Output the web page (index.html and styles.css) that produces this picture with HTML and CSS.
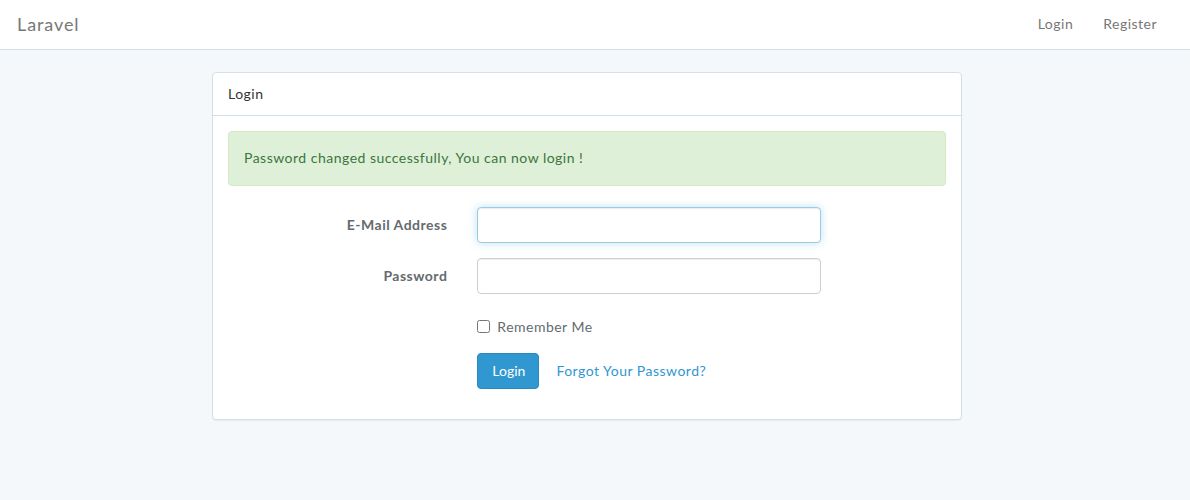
FILE: index.html
```html
<!DOCTYPE html>
<html lang="en">
<head>
<meta charset="utf-8">
<title>Laravel</title>
<link rel="stylesheet" href="styles.css">
</head>
<body>
<nav class="navbar">
  <a class="brand" href="#">Laravel</a>
  <ul class="nav-right">
    <li><a href="#">Login</a></li>
    <li><a href="#">Register</a></li>
  </ul>
</nav>
<main class="main">
  <div class="panel">
    <div class="panel-heading">Login</div>
    <div class="panel-body">
      <div class="alert">Password changed successfully, You can now login !</div>
      <form class="form">
        <div class="form-group">
          <label class="control-label" for="email">E-Mail Address</label>
          <div class="field"><input id="email" type="email" class="form-control focused"></div>
        </div>
        <div class="form-group">
          <label class="control-label" for="password">Password</label>
          <div class="field"><input id="password" type="password" class="form-control"></div>
        </div>
        <div class="form-group">
          <div class="spacer"></div>
          <div class="field checkbox"><label><input type="checkbox" class="cb"> Remember Me</label></div>
        </div>
        <div class="form-group last">
          <div class="spacer"></div>
          <div class="field actions">
            <button type="button" class="btn">Login</button>
            <a class="btn-link" href="#">Forgot Your Password?</a>
          </div>
        </div>
      </form>
    </div>
  </div>
</main>
</body>
</html>
```

FILE: styles.css
```css
* { box-sizing: border-box; }
html, body { margin: 0; padding: 0; }
body {
  background: #f5f8fa;
  font-family: Lato, "Open Sans", sans-serif;
  font-size: 14px;
  line-height: 1.6;
  letter-spacing: 0.035em;
  color: #636b6f;
  height: 500px;
}
a { text-decoration: none; }
.navbar {
  height: 50px;
  background: #fff;
  border-bottom: 1px solid #d3e0e9;
  display: flex;
  align-items: center;
  justify-content: space-between;
  padding: 0 18px 2px 17px;
}
.brand {
  color: #777;
  font-size: 18px;
  line-height: 20px;
  letter-spacing: 0.05em;
}
.nav-right {
  list-style: none;
  margin: 0;
  padding: 0;
  display: flex;
}
.nav-right a {
  display: block;
  padding: 0 15px;
  color: #777;
  line-height: 22px;
}
.main {
  padding-top: 22px;
  display: flex;
  justify-content: center;
}
.panel {
  width: 750px;
  margin-left: -16px;
  background: #fff;
  border: 1px solid #d3e0e9;
  border-radius: 4px;
  box-shadow: 0 1px 1px rgba(0,0,0,0.05);
}
.panel-heading {
  padding: 10px 15px;
  border-bottom: 1px solid #d3e0e9;
  color: #333;
}
.panel-body {
  padding: 15px;
}
.alert {
  background: #dff0d8;
  border: 1px solid #d6e9c6;
  color: #3c763d;
  padding: 15px;
  border-radius: 4px;
  margin-bottom: 21px;
}
.form-group {
  display: flex;
  margin: 0 -15px 15px;
}
.control-label, .spacer {
  width: 33.3333%;
  padding: 7px 15px 0;
  text-align: right;
  font-weight: 700;
}
.field {
  width: 50%;
  padding: 0 15px;
}
.form-control {
  display: block;
  width: 100%;
  height: 36px;
  padding: 6px 12px;
  font: inherit;
  color: #555;
  background: #fff;
  border: 1px solid #ccd0d2;
  border-radius: 4px;
  box-shadow: inset 0 1px 1px rgba(0,0,0,0.075);
}
.form-control.focused {
  border-color: #98cbe8;
  box-shadow: inset 0 1px 1px rgba(0,0,0,0.075), 0 0 8px rgba(152,203,232,0.6);
  outline: none;
}
.checkbox {
  padding-top: 7px;
  min-height: 29px;
}
.checkbox label {
  display: block;
  padding-left: 20px;
  position: relative;
}
.cb {
  position: absolute;
  margin: 4px 0 0 -20px;
  width: 13px;
  height: 13px;
}
.actions {
  display: flex;
  align-items: center;
  gap: 5px;
}
.btn {
  height: 36px;
  padding: 6px 13px 6px 14px;
  font: inherit;
  color: #fff;
  background: #3097d1;
  border: 1px solid #2a88bd;
  border-radius: 4px;
}
.btn-link {
  color: #3097d1;
  padding: 6px 12px;
}
```
